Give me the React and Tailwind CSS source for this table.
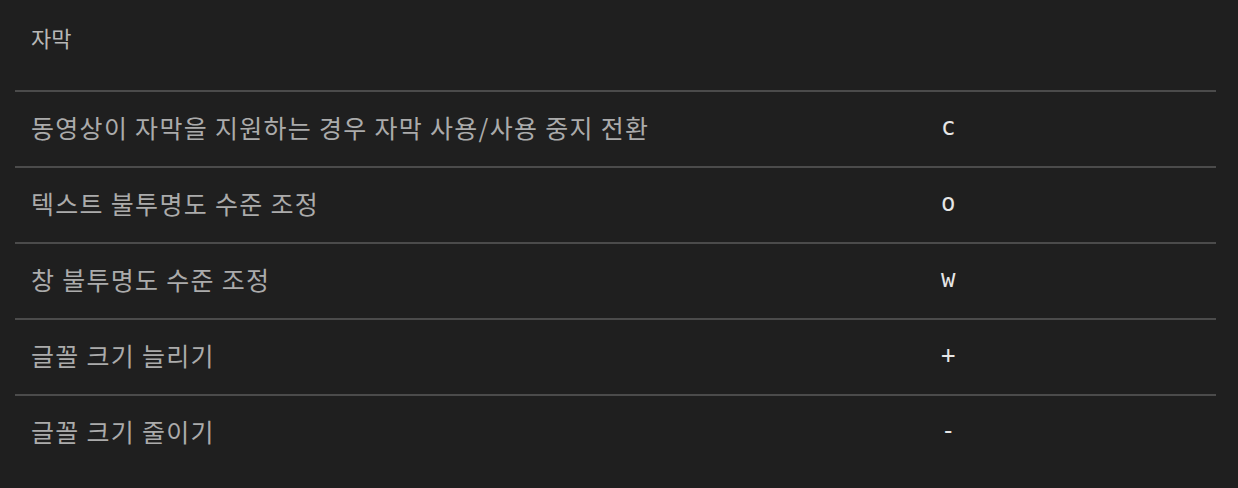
import React from 'react';

const shortcuts = [
    { label: '동영상이 자막을 지원하는 경우 자막 사용/사용 중지 전환', key: 'c' },
    { label: '텍스트 불투명도 수준 조정', key: 'o' },
    { label: '창 불투명도 수준 조정', key: 'w' },
    { label: '글꼴 크기 늘리기', key: '+' },
    { label: '글꼴 크기 줄이기', key: '-' },
];

const App = () => {
    return (
        <div
            className="min-h-[488px] w-full bg-[#1f1f1f] pl-[15px] pr-[22px]"
            style={{ fontFamily: '"Noto Sans CJK KR", "Noto Sans", sans-serif' }}
        >
            <div className="flex h-[90px] items-start pl-4 pt-[22px]">
                <h3 className="text-[22px] leading-[30px] text-[#b8b8b8]">자막</h3>
            </div>

            {shortcuts.map((item) => (
                <div
                    key={item.key}
                    className="flex h-[76px] items-center border-t-2 border-[#4b4b4b] px-4 pb-[5px]"
                >
                    <span className="w-[910px] text-[25px] leading-[32px] tracking-[1.3px] text-[#ababab]">
                        {item.label}
                    </span>
                    <span
                        className="text-[24px] leading-[32px] text-[#e6e6e6]"
                        style={{ fontFamily: '"DejaVu Sans Mono", monospace' }}
                    >
                        {item.key}
                    </span>
                </div>
            ))}
        </div>
    );
};

export default App;
